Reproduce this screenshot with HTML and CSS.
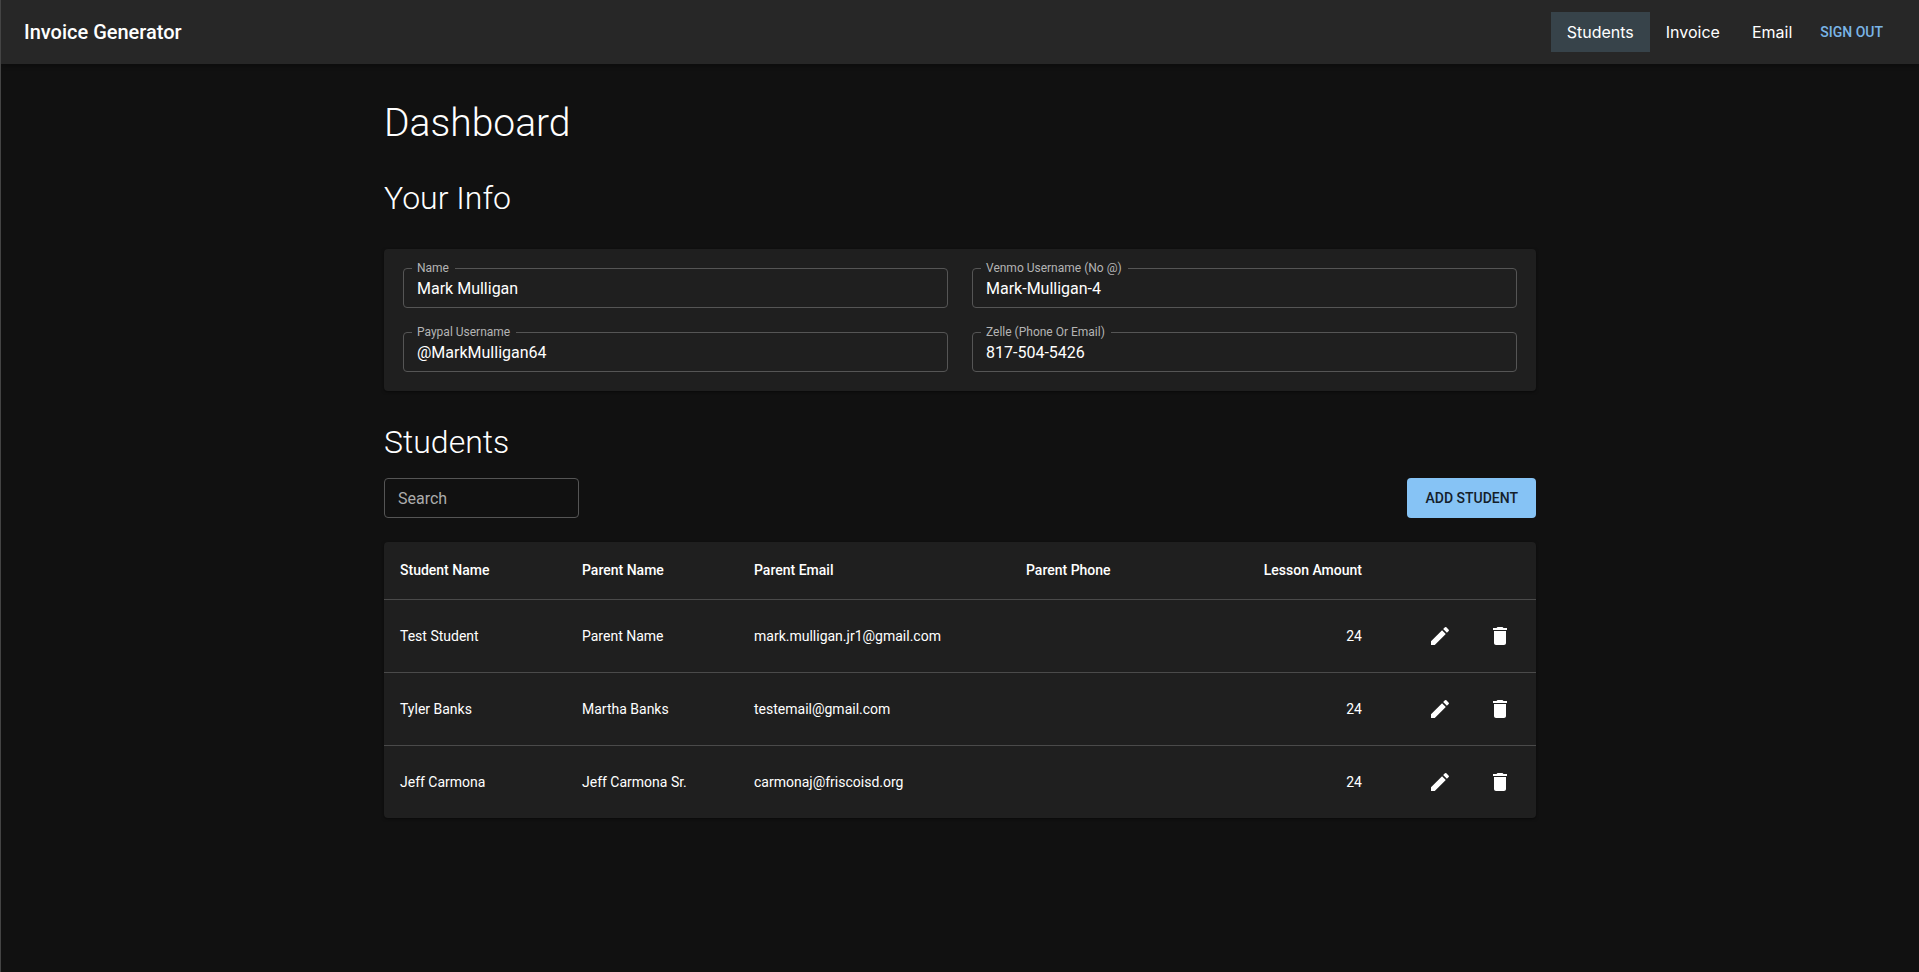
FILE: index.html
```html
<!DOCTYPE html>
<html lang="en">
<head>
<meta charset="utf-8">
<meta name="viewport" content="width=device-width, initial-scale=1">
<title>Invoice Generator</title>
<link rel="stylesheet" href="styles.css">
</head>
<body>
<svg class="sprite" aria-hidden="true">
  <symbol id="icon-edit" viewBox="0 0 24 24"><path d="M3 17.25V21h3.75L17.81 9.94l-3.75-3.75L3 17.25zM20.71 7.04c.39-.39.39-1.02 0-1.41l-2.34-2.34a.9959.9959 0 0 0-1.41 0l-1.83 1.83 3.75 3.75 1.83-1.83z"/></symbol>
  <symbol id="icon-delete" viewBox="0 0 24 24"><path d="M6 19c0 1.100.9 2 2 2h8c1.100 0 2-.9 2-2V7H6v12zM19 4h-3.500l-1-1h-5l-1 1H5v2h14V4z"/></symbol>
</svg>
<header class="app-bar">
  <div class="brand">Invoice Generator</div>
  <nav class="nav">
    <a class="nav-link active" href="#students">Students</a>
    <a class="nav-link" href="#invoice">Invoice</a>
    <a class="nav-link" href="#email">Email</a>
    <button class="sign-out" type="button">SIGN OUT</button>
  </nav>
</header>
<main class="container">
  <h1 class="page-title">Dashboard</h1>
  <h2 class="section-title">Your Info</h2>
  <form class="card info">
    <div class="field"><label class="field-label" for="name">Name</label><input class="text-input" id="name" type="text" value="Mark Mulligan"></div>
    <div class="field"><label class="field-label" for="venmo">Venmo Username (No @)</label><input class="text-input" id="venmo" type="text" value="Mark-Mulligan-4"></div>
    <div class="field"><label class="field-label" for="paypal">Paypal Username</label><input class="text-input" id="paypal" type="text" value="@MarkMulligan64"></div>
    <div class="field"><label class="field-label" for="zelle">Zelle (Phone Or Email)</label><input class="text-input" id="zelle" type="text" value="817-504-5426"></div>
  </form>
  <h2 class="section-title students-title" id="students">Students</h2>
  <div class="toolbar">
    <input class="text-input search" type="search" placeholder="Search" aria-label="Search">
    <button class="add-button" type="button">ADD STUDENT</button>
  </div>
  <div class="card">
    <table class="students">
      <colgroup><col class="col-student"><col class="col-parent"><col class="col-email"><col class="col-phone"><col class="col-amount"><col class="col-actions"></colgroup>
      <thead>
        <tr><th>Student Name</th><th>Parent Name</th><th>Parent Email</th><th>Parent Phone</th><th class="number">Lesson Amount</th><td></td></tr>
      </thead>
      <tbody>
        <tr><td>Test Student</td><td>Parent Name</td><td>mark.mulligan.jr1@gmail.com</td><td></td><td class="number">24</td>
          <td><div class="actions"><button class="icon-button" type="button" aria-label="Edit Test Student"><svg class="icon"><use href="#icon-edit"/></svg></button><button class="icon-button" type="button" aria-label="Delete Test Student"><svg class="icon"><use href="#icon-delete"/></svg></button></div></td></tr>
        <tr><td>Tyler Banks</td><td>Martha Banks</td><td>testemail@gmail.com</td><td></td><td class="number">24</td>
          <td><div class="actions"><button class="icon-button" type="button" aria-label="Edit Tyler Banks"><svg class="icon"><use href="#icon-edit"/></svg></button><button class="icon-button" type="button" aria-label="Delete Tyler Banks"><svg class="icon"><use href="#icon-delete"/></svg></button></div></td></tr>
        <tr><td>Jeff Carmona</td><td>Jeff Carmona Sr.</td><td>carmonaj@friscoisd.org</td><td></td><td class="number">24</td>
          <td><div class="actions"><button class="icon-button" type="button" aria-label="Edit Jeff Carmona"><svg class="icon"><use href="#icon-edit"/></svg></button><button class="icon-button" type="button" aria-label="Delete Jeff Carmona"><svg class="icon"><use href="#icon-delete"/></svg></button></div></td></tr>
      </tbody>
    </table>
  </div>
</main>
</body>
</html>
```
FILE: styles.css
```css
* {
  box-sizing: border-box;
}

body {
  margin: 0;
  min-height: 100vh;
  border-left: 1px solid #444;
  background: #111;
  color: #fff;
  font-family: Roboto, "Liberation Sans", sans-serif;
  font-size: 16px;
  line-height: 24px;
}

button,
input {
  font: inherit;
  color: inherit;
}

button {
  border: 0;
  background: none;
  cursor: pointer;
}

.sprite {
  display: none;
}

.app-bar {
  display: flex;
  align-items: center;
  justify-content: space-between;
  min-height: 64px;
  padding: 0 24px 0 23px;
  background: #272727;
  box-shadow: 0 2px 4px rgba(0, 0, 0, 0.3);
}

.brand {
  font-size: 20px;
  font-weight: 500;
  line-height: 32px;
}

.nav {
  display: flex;
  align-items: center;
}

.nav-link {
  padding: 8px 16px;
  color: #fff;
  font-family: Inter, Roboto, sans-serif;
  font-size: 16px;
  text-decoration: none;
}

.nav-link.active {
  background: #37434a;
}

.sign-out {
  padding: 8px 12px;
  color: #7ab5e6;
  font-size: 14px;
  font-weight: 500;
}

.container {
  max-width: 1200px;
  margin: 0 auto;
  padding: 32px 24px;
}

.page-title {
  margin: 0 0 30px;
  font-size: 39px;
  font-weight: 300;
  line-height: 54px;
}

.section-title {
  margin: 0 0 32px;
  font-size: 32px;
  font-weight: 300;
  line-height: 37px;
}

.students-title {
  margin: 33px 0 17px;
}

.card {
  border-radius: 4px;
  background: #1f1f1f;
  box-shadow: 0 1px 3px rgba(0, 0, 0, 0.5);
}

.info {
  display: grid;
  grid-template-columns: 1fr 1fr;
  gap: 24px;
  padding: 19px;
}

.field {
  position: relative;
}

.field-label {
  position: absolute;
  top: -8px;
  left: 9px;
  padding: 0 6px 0 5px;
  background: #1f1f1f;
  color: #b4b4b4;
  font-size: 12px;
  line-height: 16px;
}

.text-input {
  display: block;
  width: 100%;
  height: 40px;
  padding: 0 13px;
  border: 1px solid #555;
  border-radius: 4px;
  outline: 0;
  background: transparent;
}

.toolbar {
  display: flex;
  justify-content: space-between;
  margin-bottom: 24px;
}

.search {
  width: 195px;
  appearance: none;
}

.search::placeholder {
  color: #acacac;
  opacity: 1;
}

.add-button {
  padding: 8px 18px;
  border-radius: 4px;
  background: #86c3f5;
  color: #14202a;
  font-size: 14px;
  font-weight: 500;
}

.students {
  width: 100%;
  border-collapse: collapse;
  table-layout: fixed;
  font-size: 14px;
}

.col-student { width: 182px; }
.col-parent { width: 172px; }
.col-email { width: 272px; }
.col-phone { width: 236px; }
.col-amount { width: 132px; }
.col-actions { width: 158px; }

.students th,
.students td {
  padding: 16px;
  border-bottom: 1px solid #4a4a4a;
  text-align: left;
}

.students th {
  height: 57px;
  font-weight: 500;
}

.students tbody tr:last-child td {
  border-bottom: 0;
}

.students .number {
  text-align: right;
}

.actions {
  display: flex;
  justify-content: flex-end;
  gap: 20px;
}

.icon-button {
  display: flex;
  padding: 8px;
}

.icon {
  width: 24px;
  height: 24px;
  fill: #fff;
}
```
